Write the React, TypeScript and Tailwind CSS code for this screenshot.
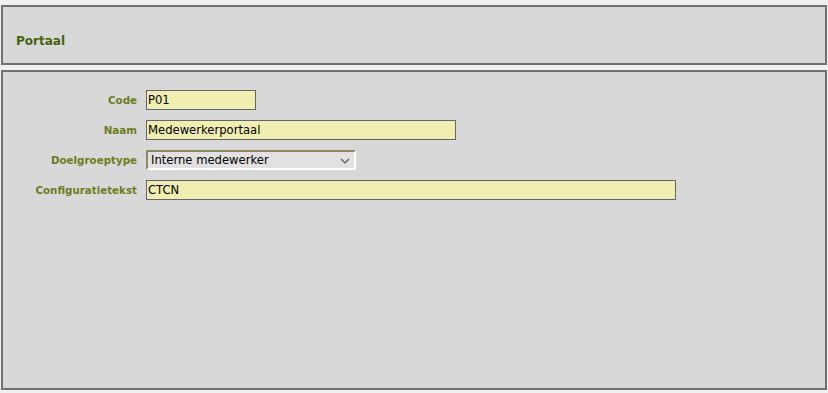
const fields = [
  { label: 'Code', value: 'P01', width: 'w-[110px]' },
  { label: 'Naam', value: 'Medewerkerportaal', width: 'w-[310px]' },
  { label: 'Doelgroeptype', value: 'Interne medewerker', width: 'w-[210px]', select: true },
  { label: 'Configuratietekst', value: 'CTCN', width: 'w-[530px]' },
];

export default function App() {
  return (
    <div className="w-[828px] h-[393px] bg-[#f0f0f0] pt-[5px] pl-[1px] pr-[1px] flex flex-col gap-[5px] overflow-hidden" style={{ fontFamily: '"DejaVu Sans", Verdana, sans-serif' }}>
      <div className="h-[60px] bg-[#d8d8d8] border-2 border-[#717171] px-[13px] pt-[26px]">
        <h1 className="text-[12px] font-bold text-[#47620f] leading-[16px]">Portaal</h1>
      </div>
      <div className="h-[320px] bg-[#d8d8d8] border-2 border-[#717171] pt-[18px]">
        <div className="flex flex-col gap-[10px]">
          {fields.map((f) => (
            <div key={f.label} className="flex items-center h-[20px]">
              <label className="w-[134px] text-right text-[10.3px] font-bold text-[#6c7c1c] pt-[1px]">{f.label}</label>
              <div className="w-[9px]" />
              {f.select ? (
                <div className={`${f.width} h-[20px] bg-[#e1e1e1] border-t-2 border-l-2 border-t-[#8d8662] border-l-[#8d8662] border-b-2 border-r-2 border-b-white border-r-white flex items-center justify-between pl-[3px] pr-[4px] pt-[1px]`}>
                  <span className="text-[11.6px] text-black leading-none">{f.value}</span>
                  <svg width="10" height="6" viewBox="0 0 10 6" fill="none" stroke="#555" strokeWidth="1.2">
                    <path d="M1 1l4 4 4-4" />
                  </svg>
                </div>
              ) : (
                <div className={`${f.width} h-[20px] bg-[#f0efb1] border border-[#62666b] flex items-center px-[1px] pt-[1px]`}>
                  <span className="text-[11.6px] text-black leading-none">{f.value}</span>
                </div>
              )}
            </div>
          ))}
        </div>
      </div>
    </div>
  );
}
